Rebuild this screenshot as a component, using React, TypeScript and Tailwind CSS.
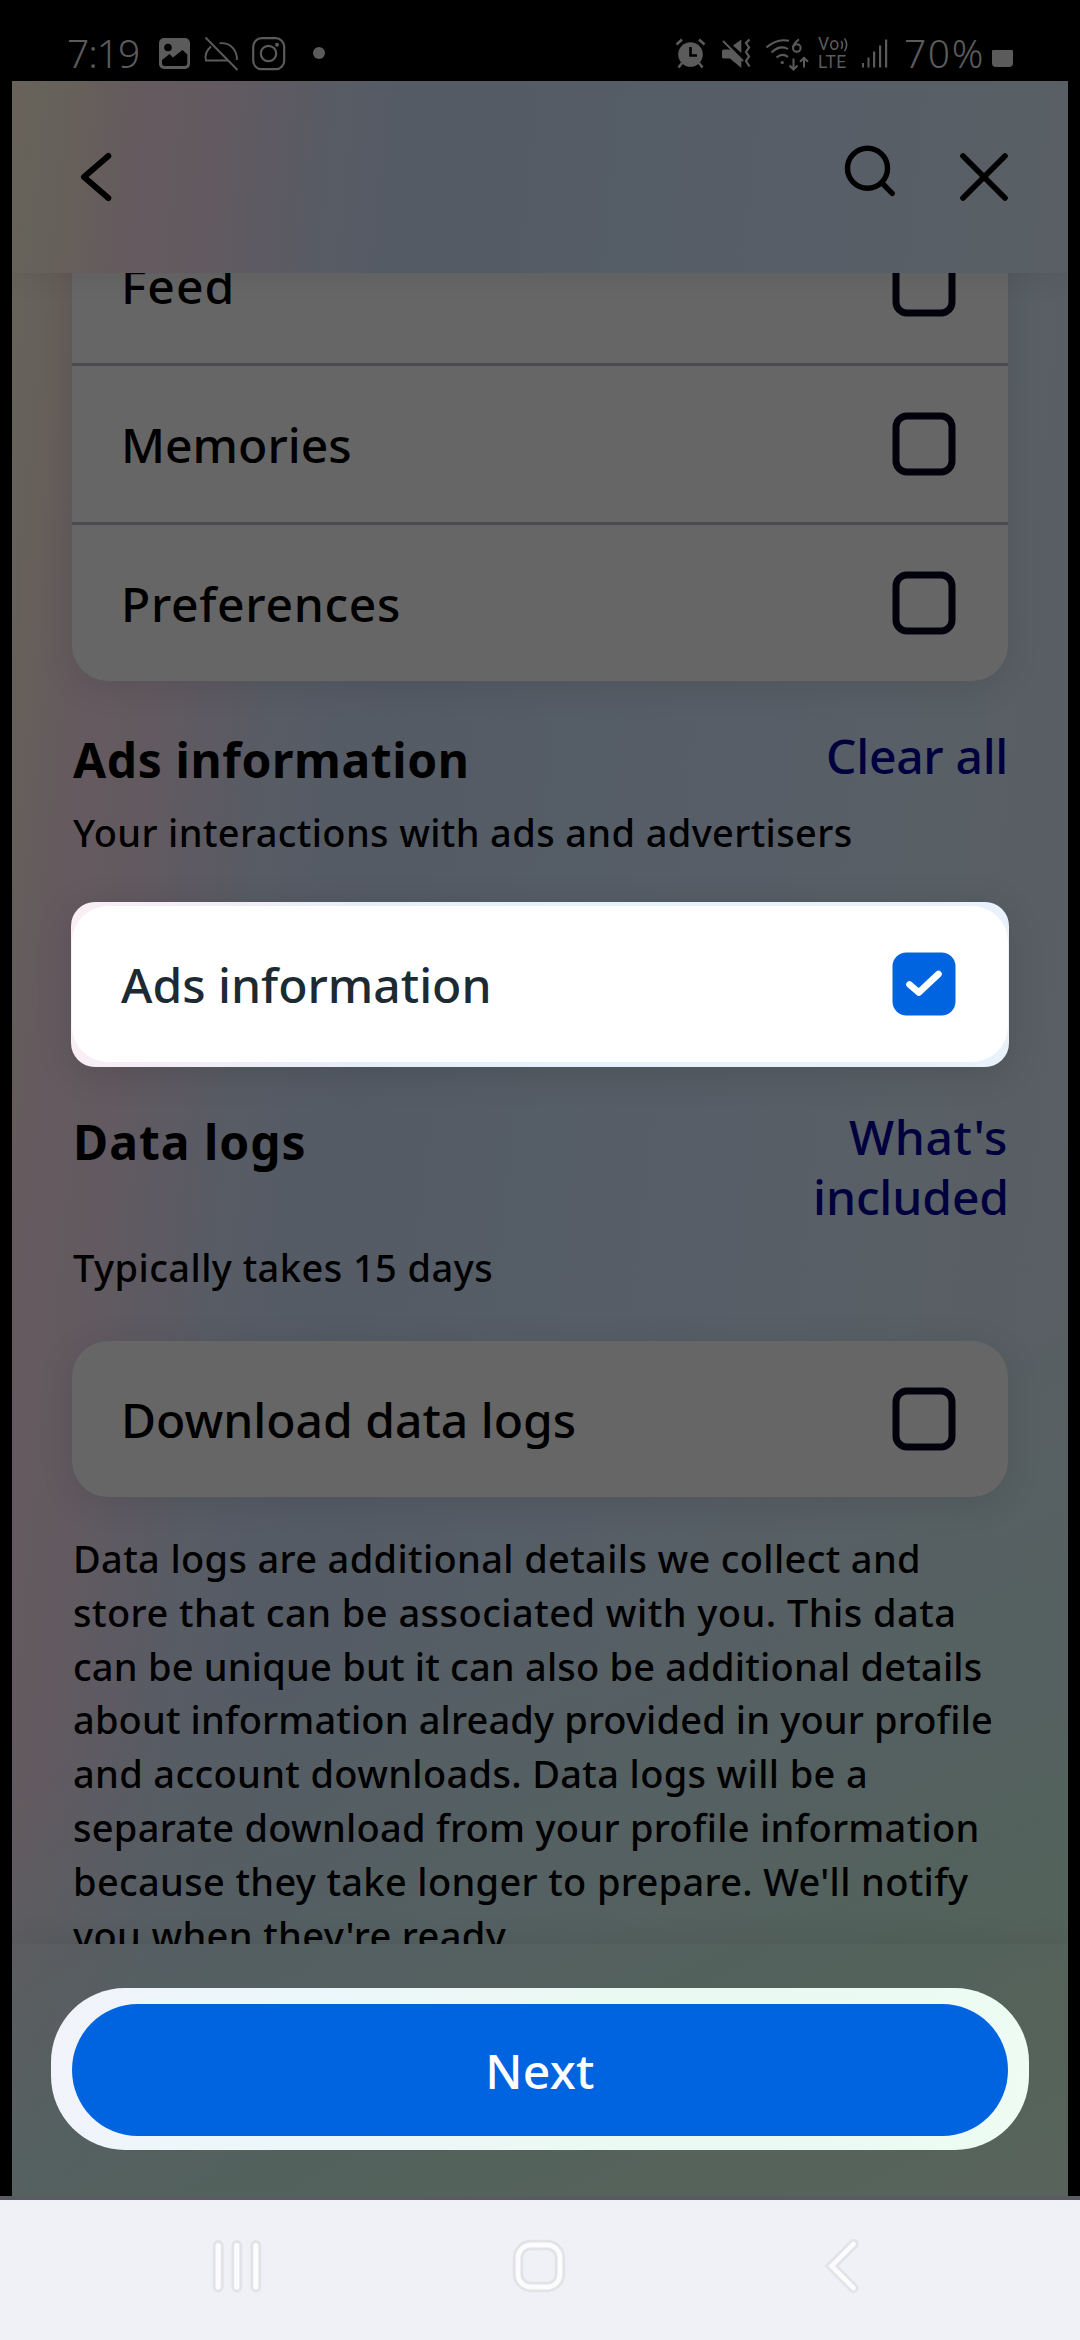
import React from "react";

function Checkbox({ checked = false }: { checked?: boolean }) {
  return (
    <svg viewBox="0 0 64 64" className="h-16 w-16 shrink-0" fill="none">
      {checked ? (
        <>
          <rect x="0.5" y="0.5" width="63" height="63" rx="14" fill="#0064e0" />
          <path d="M17.5 32.5 L26.8 40.5 L46.5 22" stroke="#ffffff" strokeWidth="6.6" strokeLinecap="round" strokeLinejoin="round" />
        </>
      ) : (
        <rect x="4" y="4" width="56" height="56" rx="11" stroke="#02020d" strokeWidth="7" />
      )}
    </svg>
  );
}

function OptionRow({ label, tracking = "", divided = false }: { label: string; tracking?: string; divided?: boolean }) {
  return (
    <div className={`flex items-center justify-between pr-[52px] pl-[49px] ${divided ? "h-[159px] border-b-[3px] border-[#4a4c52]" : "h-[156px]"}`}>
      <span className={`pt-[2px] text-[48px] leading-[60px] font-medium whitespace-nowrap text-black ${tracking}`}>{label}</span>
      <Checkbox />
    </div>
  );
}

function StatusBar() {
  return (
    <div className="flex h-[81px] w-full items-start bg-black pt-[36px] text-[#5b5b5b]">
      <div className="ml-[67px] w-[92px] text-[39px] leading-[34px] font-light tracking-[-1px] whitespace-nowrap">7:19</div>
      <svg viewBox="159 36 172 36" className="h-9 w-[172px]" fill="none">
        <rect x="159" y="38" width="31" height="31" rx="5" fill="#5b5b5b" />
        <circle cx="168" cy="47.5" r="3.8" fill="#000" />
        <path d="M162 60 L169.5 54 L173 57.5 L182.5 50 L187.3 54.5 V63 Q187.3 66 184.3 66 H165 Q162 66 162 63Z" fill="#000" />
        <g stroke="#5b5b5b" strokeWidth="1.9">
          <path d="M205.5 37.5 L237.5 70" />
          <path d="M211 46.5 Q204 52.5 206 60.5 H228" />
          <path d="M219.5 43.2 C231 42 237.5 51 236.8 60" />
        </g>
        <g stroke="#5b5b5b" strokeWidth="2.2">
          <rect x="253.2" y="38.2" width="31" height="31" rx="8.5" />
          <circle cx="268.5" cy="53.5" r="7.7" />
        </g>
        <circle cx="277" cy="44.8" r="2" fill="#5b5b5b" />
        <circle cx="319" cy="53" r="6" fill="#5b5b5b" />
      </svg>
      <div className="flex-1" />
      <svg viewBox="674 36 136 36" className="h-9 w-[136px]" fill="none">
        <circle cx="690.5" cy="54.5" r="12.3" fill="#5b5b5b" />
        <g stroke="#5b5b5b" strokeWidth="2.6">
          <path d="M676.5 44.5 L682 39.5" />
          <path d="M704.5 44.5 L699 39.5" />
          <path d="M682 63 L678.5 67.5" />
          <path d="M699 63 L702.5 67.5" />
        </g>
        <path d="M690.5 47 V55.5 H697" stroke="#000" strokeWidth="2.6" />
        <path d="M722 51 Q722 49.5 724 49.5 H728 L732 50 L741.3 59.5 V68 L730 58.5 H724 Q722 58.5 722 57Z" fill="#5b5b5b" />
        <path d="M733 45.5 L741.3 39.5 V53Z" fill="#5b5b5b" />
        <path d="M723 41 L743 61" stroke="#5b5b5b" strokeWidth="2" />
        <path d="M749.5 39.5 L746 43 L749 47.5 L746 52 L749 56.5 L746 61 L749.5 66.5" stroke="#5b5b5b" strokeWidth="2.2" />
        <g stroke="#5b5b5b" strokeWidth="2">
          <path d="M766.5 47.5 Q777 38 789 40.8" />
          <path d="M771.5 52.5 Q780 44.5 788 49" />
          <path d="M776.5 57.5 Q782.5 52.5 788 57" />
          <path d="M793.5 58.5 V69 M789.5 65.5 L793.5 69.5 L797.5 65.5" />
          <path d="M804 67.5 V58 M800 61.8 L804 57.8 L808 61.8" />
          <circle cx="796.8" cy="48" r="3.8" />
          <path d="M799 39.3 Q794.5 42 793 47.5" />
        </g>
        <circle cx="782.3" cy="62.5" r="1.6" fill="#5b5b5b" />
      </svg>
      <div className="ml-2 flex w-[38px] flex-col font-['Roboto',sans-serif] text-[17.5px] leading-[17px] tracking-[0.4px] whitespace-nowrap">
        <div className="flex h-[18px]">
          <span>Vo</span>
          <svg viewBox="0 0 10 18" className="h-[17px] w-[10px]" fill="none" stroke="#5b5b5b" strokeWidth="1.7">
            <path d="M1 5.5 Q3.5 9.5 1 13.5 M4.5 2.5 Q9 9.5 4.5 16" />
          </svg>
        </div>
        <span>LTE</span>
      </div>
      <svg viewBox="858 36 32 36" className="ml-[2px] h-9 w-8" fill="#5b5b5b">
        <rect x="862" y="63" width="2" height="4.5" />
        <rect x="867.5" y="57.5" width="2" height="10" />
        <rect x="873" y="51.5" width="2.2" height="16" />
        <rect x="879" y="45.5" width="2.2" height="22" />
        <rect x="885" y="39.5" width="2.2" height="28" />
      </svg>
      <div className="ml-[14px] w-[88px] text-[39px] leading-[34px] font-light tracking-[1.6px] whitespace-nowrap">70%</div>
      <div className="mt-[14px] mr-[67px] h-[17px] w-[21px] rounded-t-[1px] rounded-b-[4px] bg-[#5b5b5b]" />
    </div>
  );
}

function Header() {
  return (
    <header className="relative z-10 flex h-48 shrink-0 items-start pl-[60px] shadow-[0_0_30px_rgba(0,0,0,0.09)]">
      <svg viewBox="72 141 48 72" className="mt-[60px] h-[72px] w-12" fill="none" stroke="#000" strokeWidth="6" strokeLinecap="round" strokeLinejoin="round">
        <path d="M108.3 156 L84 177 L108.3 198" />
      </svg>
      <div className="flex-1" />
      <svg viewBox="840 141 60 72" className="mt-[60px] h-[72px] w-[60px]" fill="none" stroke="#000" strokeWidth="5.4" strokeLinecap="round">
        <circle cx="867.5" cy="168.3" r="20" />
        <path d="M882.5 183.5 L892.2 193.3" />
      </svg>
      <svg viewBox="954 141 60 72" className="mt-[60px] mr-[54px] ml-[54px] h-[72px] w-[60px]" fill="none" stroke="#000" strokeWidth="5.6" strokeLinecap="round">
        <path d="M963 156 L1005 198 M1005 156 L963 198" />
      </svg>
    </header>
  );
}

const LOG_LINES: { text: string; tracking: string }[] = [
  { text: "Data logs are additional details we collect and", tracking: "tracking-[0.34px]" },
  { text: "store that can be associated with you. This data", tracking: "tracking-[0.46px]" },
  { text: "can be unique but it can also be additional details", tracking: "tracking-[0.2px]" },
  { text: "about information already provided in your profile", tracking: "tracking-[0.14px]" },
  { text: "and account downloads. Data logs will be a", tracking: "tracking-[0.34px]" },
  { text: "separate download from your profile information", tracking: "tracking-[0.28px]" },
  { text: "because they take longer to prepare. We'll notify", tracking: "tracking-[0.33px]" },
  { text: "you when they're ready.", tracking: "tracking-[0.35px]" },
];

function Content() {
  return (
    <main className="h-[1671px] shrink-0 overflow-hidden px-[60px]">
      <div className="-mt-[66px] rounded-[36px] bg-[#666666] shadow-[0_6px_36px_rgba(0,0,0,0.1)]">
        <OptionRow label="Feed" tracking="tracking-[1px]" divided />
        <OptionRow label="Memories" divided />
        <OptionRow label="Preferences" tracking="tracking-[0.7px]" />
      </div>

      <div className="mt-[45px] flex h-16 items-start justify-between">
        <h2 className="mt-[4px] ml-[1px] text-[48px] leading-[60px] font-bold tracking-[0.6px] text-black">Ads information</h2>
        <span className="text-[48px] leading-[60px] font-medium tracking-[-0.3px] text-[#00003f]">Clear all</span>
      </div>
      <p className="mt-[15px] ml-px text-[38px] leading-[54px] font-medium tracking-[0.36px] whitespace-nowrap text-black">Your interactions with ads and advertisers</p>

      <div className="-mx-px mt-[43px] rounded-3xl bg-[linear-gradient(90deg,#faedf6_0%,#f3edf6_12%,#e5eef8_30%,#e6f2fb_55%,#e9f1fb_100%)] px-px pt-[4px] pb-[5px] shadow-[0_6px_36px_rgba(0,0,0,0.13)]">
        <div className="flex h-[156px] items-center justify-between rounded-[36px] bg-white pr-[52px] pl-[49px]">
          <span className="pt-[2px] text-[48px] leading-[60px] font-medium text-[#1c2b33]">Ads information</span>
          <Checkbox checked />
        </div>
      </div>

      <div className="mt-[40px] flex h-[120px] items-start justify-between">
        <h2 className="mt-[5px] ml-px text-[48px] leading-[60px] font-bold tracking-[1px] text-black">Data logs</h2>
        <span className="text-right text-[48px] leading-[60px] font-medium text-[#00003f]">
          <span className="block tracking-[0.6px]">What's</span>
          <span className="-mr-px block tracking-[-0.1px]">included</span>
        </span>
      </div>
      <p className="mt-[13px] ml-px text-[38px] leading-[54px] font-medium tracking-[0.43px] text-black">Typically takes 15 days</p>

      <div className="mt-[47px] rounded-[36px] bg-[#666666] shadow-[0_6px_36px_rgba(0,0,0,0.1)]">
        <OptionRow label="Download data logs" />
      </div>

      <p className="mt-[35px] ml-px text-[38px] leading-[53.8px] font-medium text-black">
        {LOG_LINES.map((line) => (
          <span key={line.text} className={`block whitespace-nowrap ${line.tracking}`}>
            {line.text}
          </span>
        ))}
      </p>
    </main>
  );
}

function Footer() {
  return (
    <footer className="relative z-10 h-[252px] shrink-0 px-[39px] pt-11 shadow-[0_0_30px_rgba(0,0,0,0.09)]">
      <div className="h-[162px] rounded-[74px] bg-[linear-gradient(100deg,#f3f2fb_0%,#eef6fa_10%,#ebf7fa_28%,#edf7f6_42%,#eafaf2_60%,#ebfbf3_85%,#eefcf3_100%)] px-[21px] pt-4">
        <button className="flex h-[132px] w-full items-center justify-center rounded-full bg-[#0064e0] pt-px text-[48px] leading-[60px] font-medium tracking-[0.3px] text-white">Next</button>
      </div>
    </footer>
  );
}

function NavBar() {
  return (
    <nav className="flex h-[140px] w-full items-start bg-[#f0f1f6] pt-9">
      <svg viewBox="208 2236 58 60" className="ml-[208px] h-[60px] w-[58px]" fill="#fcfcfe" stroke="#e2e3e6" strokeWidth="2.8">
        <rect x="214.2" y="2241.5" width="8" height="49.5" rx="4" />
        <rect x="232.8" y="2241.5" width="8" height="49.5" rx="4" />
        <rect x="251.8" y="2241.5" width="8" height="49.5" rx="4" />
      </svg>
      <svg viewBox="509 2236 60 60" className="ml-[243px] h-[60px] w-[60px]" fill="none">
        <rect x="518" y="2245" width="42" height="42" rx="13" stroke="#e2e3e6" strokeWidth="10.4" />
        <rect x="518" y="2245" width="42" height="42" rx="13" stroke="#fcfcfe" strokeWidth="4.8" />
      </svg>
      <svg viewBox="820 2236 44 60" className="ml-[251px] h-[60px] w-11" fill="none" strokeLinecap="round">
        <path d="M853.5 2244 L831.5 2266 L853.5 2288" stroke="#e2e3e6" strokeWidth="10" />
        <path d="M853.5 2244 L831.5 2266 L853.5 2288" stroke="#fcfcfe" strokeWidth="4.6" />
      </svg>
    </nav>
  );
}

export default function App() {
  return (
    <div className="flex h-[2340px] w-[1080px] flex-col overflow-hidden bg-black font-['Noto_Sans',sans-serif]">
      <StatusBar />
      <div className="mx-3 flex h-[2115px] shrink-0 flex-col overflow-hidden bg-[linear-gradient(155deg,rgba(85,95,98,0)_65%,rgba(84,97,96,0.9)_80%,rgba(83,98,91,1)_88%,rgba(88,100,91,1)_100%),linear-gradient(96deg,#696159_-1%,#66635b_2.5%,#665f5a_6%,#655c5d_8%,#655a5f_11%,#625a60_16%,#5c5a63_22%,#575c65_26%,#545b65_35%,#555d66_50%,#575e67_65%,#585f65_80%,#595f62_100%)]">
        <Header />
        <Content />
        <Footer />
      </div>
      <div className="h-1 w-full shrink-0 bg-[#5a5b60]" />
      <NavBar />
    </div>
  );
}
